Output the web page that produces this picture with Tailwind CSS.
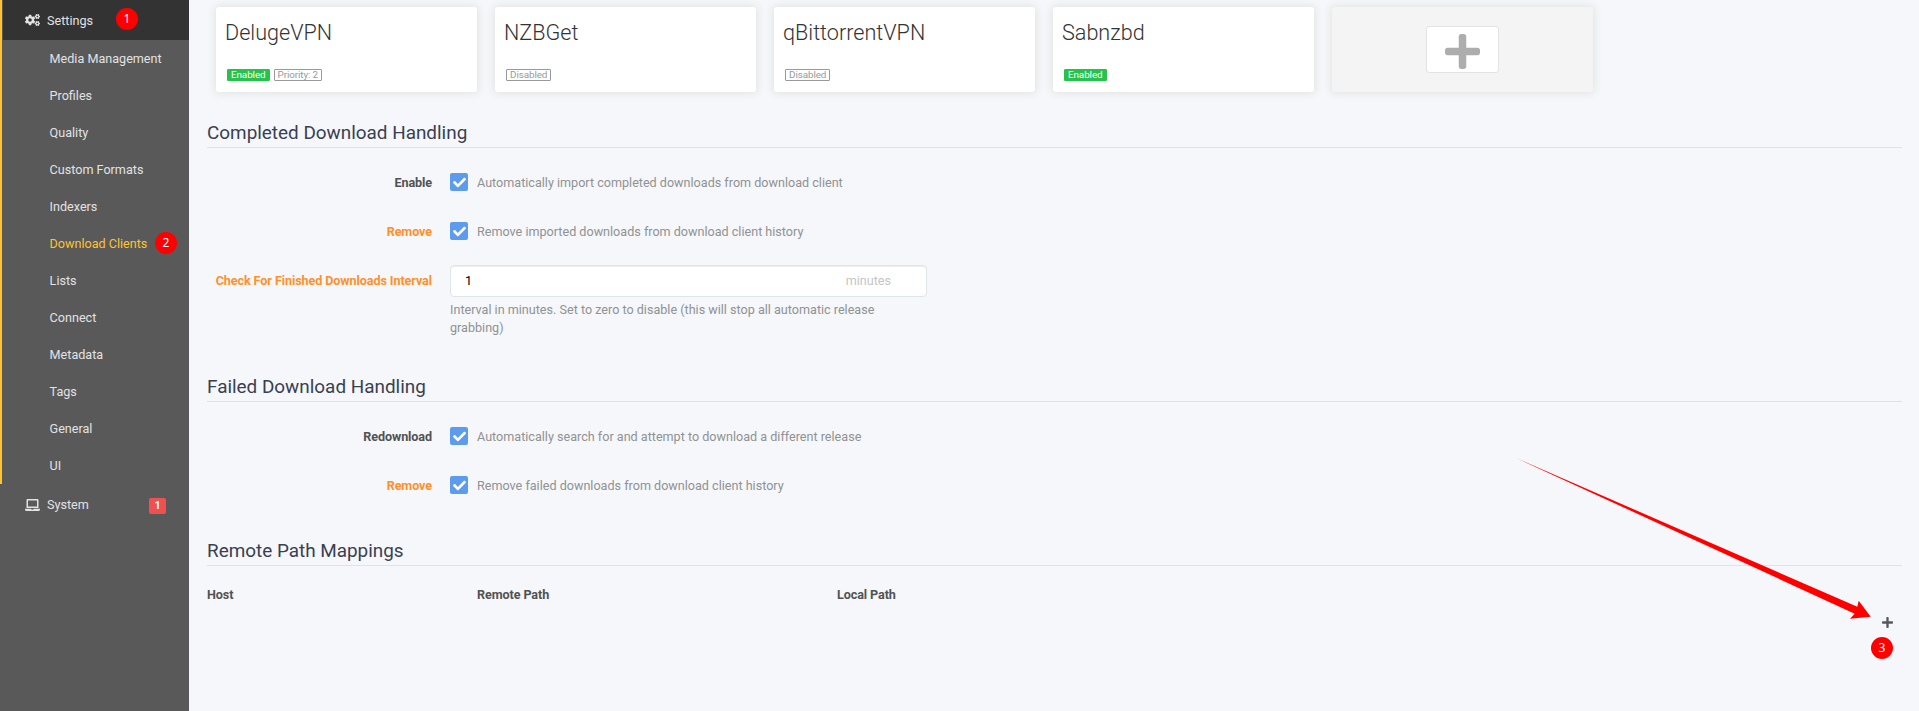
<!DOCTYPE html>
<html lang="en">
<head>
<meta charset="utf-8">
<title>Settings - Download Clients</title>
<script src="https://cdn.jsdelivr.net/npm/@tailwindcss/browser@4"></script>
</head>
<body class="relative flex h-[711px] overflow-hidden bg-[#f5f7fa] font-[Roboto,sans-serif] text-[12.6px] leading-[18px] text-[#515253]">
<svg class="hidden">
  <symbol id="plus" viewBox="0 32 448 448"><path d="M416 208H272V64c0-17.67-14.33-32-32-32h-32c-17.67 0-32 14.33-32 32v144H32c-17.67 0-32 14.33-32 32v32c0 17.67 14.33 32 32 32h144v144c0 17.67 14.33 32 32 32h32c17.67 0 32-14.33 32-32V304h144c17.67 0 32-14.33 32-32v-32c0-17.67-14.33-32-32-32z"/></symbol>
  <symbol id="check" viewBox="0 0 512 512"><path d="M173.898 439.404l-166.4-166.4c-9.997-9.997-9.997-26.206 0-36.204l36.203-36.204c9.997-9.998 26.207-9.998 36.204 0L192 312.69 432.095 72.596c9.997-9.997 26.207-9.997 36.204 0l36.203 36.204c9.997 9.997 9.997 26.206 0 36.204l-294.4 294.401c-9.998 9.997-26.207 9.997-36.204-.001z"/></symbol>
</svg>

<nav class="flex w-[189px] shrink-0 flex-col bg-[#595959] text-[#e1e2e3]">
  <div class="h-[484px] border-l-2 border-[#ffc230]">
    <a class="ml-px flex h-10 items-center bg-[#333] pl-[22px]">
      <svg class="mr-[7px] h-3 w-[15px] fill-current" viewBox="0 0 640 512">
        <path id="cog" d="M512.1 191l-8.2 14.3c-3 5.3-9.4 7.5-15.1 5.4-11.8-4.4-22.6-10.7-32.1-18.6-4.6-3.8-5.8-10.5-2.8-15.7l8.2-14.3c-6.9-8-12.3-17.3-15.9-27.4h-16.5c-6 0-11.2-4.3-12.2-10.3-2-12-2.1-24.6 0-37.1 1-6 6.2-10.4 12.2-10.4h16.5c3.6-10.1 9-19.4 15.9-27.4l-8.2-14.3c-3-5.2-1.9-11.9 2.8-15.7 9.5-7.9 20.4-14.2 32.1-18.6 5.7-2.1 12.1.1 15.1 5.4l8.2 14.3c10.5-1.9 21.2-1.9 31.7 0L552 6.3c3-5.3 9.4-7.5 15.1-5.4 11.8 4.4 22.6 10.7 32.1 18.6 4.6 3.8 5.8 10.5 2.8 15.7l-8.2 14.3c6.9 8 12.3 17.3 15.9 27.4h16.5c6 0 11.2 4.3 12.2 10.3 2 12 2.1 24.6 0 37.1-1 6-6.2 10.4-12.2 10.4h-16.5c-3.6 10.1-9 19.4-15.9 27.4l8.2 14.3c3 5.2 1.9 11.9-2.8 15.7-9.5 7.9-20.4 14.2-32.1 18.6-5.7 2.1-12.1-.1-15.1-5.4l-8.2-14.3c-10.4 1.9-21.2 1.9-31.7 0zm-10.5-58.8c38.5 29.6 82.4-14.3 52.8-52.8-38.5-29.7-82.4 14.3-52.8 52.8z"/>
        <use href="#cog" y="299"/>
        <path d="M386.3 286.1l33.7 16.8c10.1 5.8 14.5 18.1 10.5 29.1-8.9 24.2-26.4 46.4-42.6 65.8-7.4 8.9-20.2 11.1-30.3 5.3l-29.1-16.8c-16 13.7-34.6 24.6-54.9 31.7v33.6c0 11.6-8.3 21.6-19.7 23.6-24.6 4.2-50.4 4.4-75.9 0-11.5-2-20-11.9-20-23.6V418c-20.3-7.2-38.9-18-54.9-31.7L74 403c-10 5.8-22.9 3.6-30.3-5.3-16.2-19.4-33.3-41.6-42.2-65.7-4-10.9.4-23.2 10.5-29.1l33.3-16.8c-3.9-20.9-3.9-42.4 0-63.4L12 205.8c-10.1-5.8-14.6-18.1-10.5-29 8.9-24.2 26-46.4 42.2-65.8 7.4-8.9 20.2-11.1 30.3-5.3l29.1 16.8c16-13.7 34.6-24.6 54.9-31.7V57.1c0-11.5 8.2-21.5 19.6-23.5 24.6-4.2 50.5-4.4 76-.1 11.5 2 20 11.9 20 23.6v33.6c20.3 7.2 38.9 18 54.9 31.7l29.1-16.8c10-5.8 22.9-3.6 30.3 5.3 16.2 19.4 33.2 41.6 42.1 65.8 4 10.9.1 23.2-10 29.1l-33.7 16.8c3.9 21 3.9 42.5 0 63.5zm-117.6 21.1c59.2-77-28.7-164.9-105.7-105.7-59.2 77 28.7 164.9 105.7 105.7z"/>
      </svg>
      <span class="pt-px">Settings</span>
    </a>
    <div class="flex flex-col pl-[47.6px]">
      <a class="flex h-[37px] items-center">Media Management</a>
      <a class="flex h-[37px] items-center">Profiles</a>
      <a class="flex h-[37px] items-center">Quality</a>
      <a class="flex h-[37px] items-center">Custom Formats</a>
      <a class="flex h-[37px] items-center">Indexers</a>
      <a class="flex h-[37px] items-center text-[#ffc230]">Download Clients</a>
      <a class="flex h-[37px] items-center">Lists</a>
      <a class="flex h-[37px] items-center">Connect</a>
      <a class="flex h-[37px] items-center">Metadata</a>
      <a class="flex h-[37px] items-center">Tags</a>
      <a class="flex h-[37px] items-center">General</a>
      <a class="flex h-[37px] items-center">UI</a>
    </div>
  </div>
  <a class="flex h-[41px] items-center pl-[25px] pr-[23px]">
    <svg class="mr-[7px] h-3 w-[15px] fill-current" viewBox="0 0 640 512"><path d="M624 416H381.54c-.74 19.81-14.71 32-32.74 32H288c-18.69 0-33.02-17.47-32.77-32H16c-8.8 0-16 7.2-16 16v16c0 35.2 28.8 64 64 64h512c35.2 0 64-28.8 64-64v-16c0-8.8-7.2-16-16-16zM576 48c0-26.4-21.6-48-48-48H112C85.6 0 64 21.6 64 48v336h512V48zm-64 272H128V64h384v256z"/></svg>
    System
    <span class="ml-auto mt-[3px] flex h-4 w-[17px] items-center justify-center rounded-xs bg-[#f05050] text-[10.8px] font-bold text-white">1</span>
  </a>
</nav>

<main class="flex min-w-0 flex-1 flex-col pl-[18px] pr-[17px]">
  <section class="flex gap-[18px] pl-[9px] pt-[7px]">
    <div class="flex h-[85px] w-[261px] flex-col justify-between rounded-[3px] bg-white px-[9px] pb-[11px] pt-[10px] shadow-[0_0_9px_1px_#e1e1e1]">
      <div class="text-[21.6px] font-light leading-8 text-[#333]">DelugeVPN</div>
      <div class="flex gap-1 px-[2px] text-[9.9px] leading-[10px] tracking-[-0.1px]"><span class="rounded-[1px] border border-[#27c24c] bg-[#27c24c] px-[3px] text-white">Enabled</span><span class="rounded-[1px] border border-[#999] px-[3px] text-[#999]">Priority: 2</span></div>
    </div>
    <div class="flex h-[85px] w-[261px] flex-col justify-between rounded-[3px] bg-white px-[9px] pb-[11px] pt-[10px] shadow-[0_0_9px_1px_#e1e1e1]">
      <div class="text-[21.6px] font-light leading-8 text-[#333]">NZBGet</div>
      <div class="flex gap-1 px-[2px] text-[9.9px] leading-[10px] tracking-[-0.1px]"><span class="rounded-[1px] border border-[#999] px-[3px] text-[#999]">Disabled</span></div>
    </div>
    <div class="flex h-[85px] w-[261px] flex-col justify-between rounded-[3px] bg-white px-[9px] pb-[11px] pt-[10px] shadow-[0_0_9px_1px_#e1e1e1]">
      <div class="text-[21.6px] font-light leading-8 text-[#333]">qBittorrentVPN</div>
      <div class="flex gap-1 px-[2px] text-[9.9px] leading-[10px] tracking-[-0.1px]"><span class="rounded-[1px] border border-[#999] px-[3px] text-[#999]">Disabled</span></div>
    </div>
    <div class="flex h-[85px] w-[261px] flex-col justify-between rounded-[3px] bg-white px-[9px] pb-[11px] pt-[10px] shadow-[0_0_9px_1px_#e1e1e1]">
      <div class="text-[21.6px] font-light leading-8 text-[#333]">Sabnzbd</div>
      <div class="flex gap-1 px-[2px] text-[9.9px] leading-[10px] tracking-[-0.1px]"><span class="rounded-[1px] border border-[#27c24c] bg-[#27c24c] px-[3px] text-white">Enabled</span></div>
    </div>
    <div class="flex h-[85px] w-[261px] justify-center rounded-[3px] bg-[#f4f4f4] pt-[19px] shadow-[0_0_9px_1px_#e1e1e1]">
      <div class="flex h-[47px] w-[73px] justify-center rounded-[3px] border border-[#e3e3e3] bg-white pr-px pt-[7px]"><svg class="size-[35px] fill-[#adadad]"><use href="#plus"/></svg></div>
    </div>
  </section>

  <section class="mt-[27px]">
    <h2 class="h-[29px] border-b border-[#e1e2e8] text-[18.9px] leading-[27px] text-[#3a3f51]">Completed Download Handling</h2>
    <div class="mt-[25px] flex h-[18px] items-center">
      <label class="w-[225px] pt-px text-right font-bold tracking-[-0.1px]">Enable</label>
      <span class="ml-[18px] flex size-[18px] items-center justify-center rounded-xs bg-[#5d9cec]"><svg class="size-[13px] fill-white"><use href="#check"/></svg></span>
      <span class="ml-[9px] pt-px text-[#909293]">Automatically import completed downloads from download client</span>
    </div>
    <div class="mt-[31px] flex h-[18px] items-center">
      <label class="w-[225px] pt-px text-right font-bold tracking-[-0.1px] text-[#ff902b]">Remove</label>
      <span class="ml-[18px] flex size-[18px] items-center justify-center rounded-xs bg-[#5d9cec]"><svg class="size-[13px] fill-white"><use href="#check"/></svg></span>
      <span class="ml-[9px] pt-px text-[#909293]">Remove imported downloads from download client history</span>
    </div>
    <div class="mt-[25px] flex">
      <label class="w-[225px] whitespace-nowrap text-right font-bold leading-8 tracking-[-0.09px] text-[#ff902b]">Check For Finished Downloads Interval</label>
      <div class="ml-[18px] w-[477px]">
        <div class="flex h-8 items-center justify-between rounded-[4px] border border-[#dde6e9] bg-white pl-[14px] pr-[35px] text-black shadow-[inset_0_1px_1px_rgba(0,0,0,0.075)]"><span>1</span><span class="text-[#c5c5c5]">minutes</span></div>
        <p class="mt-1 w-[450px] text-[#909293]">Interval in minutes. Set to zero to disable (this will stop all automatic release grabbing)</p>
      </div>
    </div>
  </section>

  <section class="mt-[36px]">
    <h2 class="h-[29px] border-b border-[#e1e2e8] text-[18.9px] leading-[27px] text-[#3a3f51]">Failed Download Handling</h2>
    <div class="mt-[25px] flex h-[18px] items-center">
      <label class="w-[225px] pt-px text-right font-bold tracking-[-0.1px]">Redownload</label>
      <span class="ml-[18px] flex size-[18px] items-center justify-center rounded-xs bg-[#5d9cec]"><svg class="size-[13px] fill-white"><use href="#check"/></svg></span>
      <span class="ml-[9px] pt-px text-[#909293]">Automatically search for and attempt to download a different release</span>
    </div>
    <div class="mt-[31px] flex h-[18px] items-center">
      <label class="w-[225px] pt-px text-right font-bold tracking-[-0.1px] text-[#ff902b]">Remove</label>
      <span class="ml-[18px] flex size-[18px] items-center justify-center rounded-xs bg-[#5d9cec]"><svg class="size-[13px] fill-white"><use href="#check"/></svg></span>
      <span class="ml-[9px] pt-px text-[#909293]">Remove failed downloads from download client history</span>
    </div>
  </section>

  <section class="mt-[43px]">
    <h2 class="h-[29px] border-b border-[#e1e2e8] text-[18.9px] leading-[27px] text-[#3a3f51]">Remote Path Mappings</h2>
    <div class="mt-5 flex font-bold tracking-[-0.1px]">
      <span class="w-[270px]">Host</span><span class="w-[360px]">Remote Path</span><span>Local Path</span>
    </div>
    <div class="mt-[13px] flex justify-end pr-[9px]"><svg class="size-[11px] fill-[#595959]"><use href="#plus"/></svg></div>
  </section>
</main>

<!-- step markers and arrow laid over the page -->
<span class="absolute left-[116px] top-2 flex size-[22px] items-center justify-center rounded-full bg-[#f00] font-['Noto_Sans',sans-serif] text-[12px] text-white">1</span>
<span class="absolute left-[155px] top-[232px] flex size-[22px] items-center justify-center rounded-full bg-[#f00] font-['Noto_Sans',sans-serif] text-[12px] text-white">2</span>
<span class="absolute left-[1871px] top-[637px] flex size-[22px] items-center justify-center rounded-full bg-[#f00] font-['Noto_Sans',sans-serif] text-[12px] text-white">3</span>
<svg class="absolute left-[1500px] top-[440px] h-[200px] w-[400px] fill-[#f00]"><path d="M16 18L357.3 166.7L358.7 160.7L370.7 176.7L350 178.7L354.7 173.7Z"/></svg>
</body>
</html>
